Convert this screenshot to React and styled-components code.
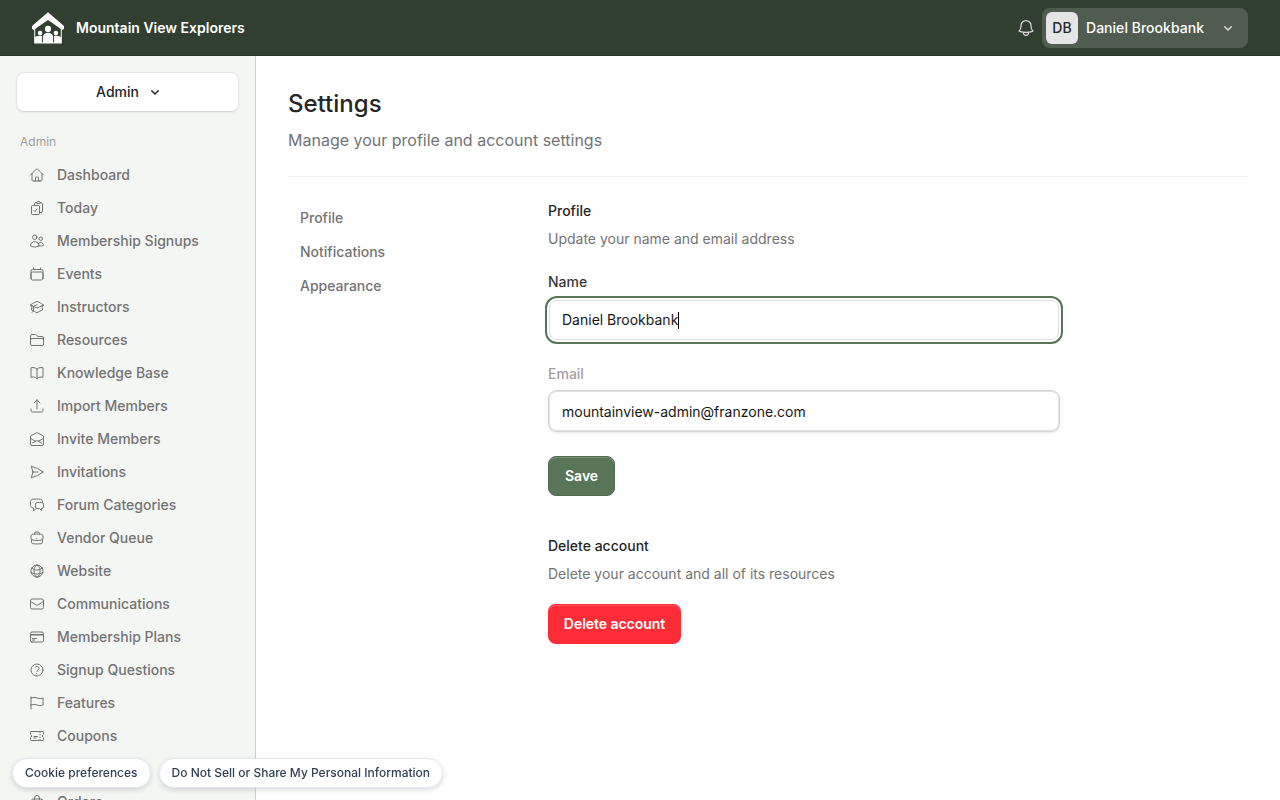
import styled, { createGlobalStyle } from 'styled-components'
import {
    HiOutlineHome,
    HiOutlineClipboardDocumentCheck,
    HiOutlineUsers,
    HiOutlineCalendar,
    HiOutlineAcademicCap,
    HiOutlineFolder,
    HiOutlineBookOpen,
    HiOutlineArrowUpTray,
    HiOutlineEnvelopeOpen,
    HiOutlinePaperAirplane,
    HiOutlineChatBubbleLeftRight,
    HiOutlineBriefcase,
    HiOutlineGlobeAlt,
    HiOutlineEnvelope,
    HiOutlineCreditCard,
    HiOutlineQuestionMarkCircle,
    HiOutlineFlag,
    HiOutlineTicket,
    HiOutlineShoppingBag,
    HiOutlineBell,
} from 'react-icons/hi2'

const navItems = [
    { label: 'Dashboard', icon: HiOutlineHome },
    { label: 'Today', icon: HiOutlineClipboardDocumentCheck },
    { label: 'Membership Signups', icon: HiOutlineUsers },
    { label: 'Events', icon: HiOutlineCalendar },
    { label: 'Instructors', icon: HiOutlineAcademicCap },
    { label: 'Resources', icon: HiOutlineFolder },
    { label: 'Knowledge Base', icon: HiOutlineBookOpen },
    { label: 'Import Members', icon: HiOutlineArrowUpTray },
    { label: 'Invite Members', icon: HiOutlineEnvelopeOpen },
    { label: 'Invitations', icon: HiOutlinePaperAirplane },
    { label: 'Forum Categories', icon: HiOutlineChatBubbleLeftRight },
    { label: 'Vendor Queue', icon: HiOutlineBriefcase },
    { label: 'Website', icon: HiOutlineGlobeAlt },
    { label: 'Communications', icon: HiOutlineEnvelope },
    { label: 'Membership Plans', icon: HiOutlineCreditCard },
    { label: 'Signup Questions', icon: HiOutlineQuestionMarkCircle },
    { label: 'Features', icon: HiOutlineFlag },
    { label: 'Coupons', icon: HiOutlineTicket },
    { label: 'Orders', icon: HiOutlineShoppingBag, spaced: true },
]

const settingsTabs = ['Profile', 'Notifications', 'Appearance']

function Chevron() {
    return (
        <svg width="16" height="16" viewBox="0 0 16 16" fill="currentColor">
            <path
                fillRule="evenodd"
                clipRule="evenodd"
                d="M4.22 6.22a.75.75 0 0 1 1.06 0L8 8.94l2.72-2.72a.75.75 0 1 1 1.06 1.06l-3.25 3.25a.75.75 0 0 1-1.06 0L4.22 7.28a.75.75 0 0 1 0-1.06Z"
            />
        </svg>
    )
}

function Logo() {
    return (
        <svg width="32" height="32" viewBox="0 0 32 32" fill="#fff">
            <path d="M16 .3 32 14v2.700l-1.600 1.400L16 7.900 1.600 18.100 0 16.700V14Z" />
            <path d="M2.200 17 3.200 16.200v14.400h25.600V16.200l1 .8v14.600H2.200Z" />
            <circle cx="16" cy="16.900" r="3.100" />
            <circle cx="8.100" cy="21.100" r="2.300" />
            <circle cx="23.900" cy="21.100" r="2.300" />
            <path d="M10.900 31v-6c0-2.700 2.200-4.300 5.100-4.300s5.100 1.600 5.100 4.300v6Z" />
            <path d="M2.800 31v-5.200c0-1.300 2.400-2 5.200-2 1 0 1.700.1 2.200.4-.2.600-.3 1-.3 1.800v5Z" />
            <path d="M29.200 31v-5.200c0-1.300-2.400-2-5.200-2-1 0-1.700.1-2.200.4.2.600.3 1 .3 1.800v5Z" />
        </svg>
    )
}

export default function App() {
    return (
        <>
            <GlobalStyle />
            <Page>
                <Header>
                    <Logo />
                    <Brand>Mountain View Explorers</Brand>
                    <BellButton>
                        <HiOutlineBell size={20} />
                    </BellButton>
                    <ProfileButton>
                        <Avatar>DB</Avatar>
                        <ProfileName>Daniel Brookbank</ProfileName>
                        <Chevron />
                    </ProfileButton>
                </Header>
                <Body>
                    <Sidebar>
                        <RoleButton>
                            Admin
                            <Chevron />
                        </RoleButton>
                        <NavHeading>Admin</NavHeading>
                        {navItems.map(({ label, icon: Icon, spaced }) =>
                            <NavItem key={label} $spaced={spaced}>
                                <Icon size={16} />
                                {label}
                            </NavItem>)}
                    </Sidebar>
                    <Main>
                        <Title>Settings</Title>
                        <Subtitle>Manage your profile and account settings</Subtitle>
                        <Columns>
                            <Tabs>
                                {settingsTabs.map((tab) => <Tab key={tab}>{tab}</Tab>)}
                            </Tabs>
                            <Form>
                                <SectionTitle>Profile</SectionTitle>
                                <SectionText>Update your name and email address</SectionText>
                                <Label>Name</Label>
                                <Field $focused>
                                    Daniel Brookbank
                                    <Caret />
                                </Field>
                                <Label $muted>Email</Label>
                                <Field>mountainview-admin@franzone.com</Field>
                                <SaveButton>Save</SaveButton>
                                <SectionTitle>Delete account</SectionTitle>
                                <SectionText>Delete your account and all of its resources</SectionText>
                                <DeleteButton>Delete account</DeleteButton>
                            </Form>
                        </Columns>
                    </Main>
                </Body>
                <ConsentBar>
                    <ConsentButton>Cookie preferences</ConsentButton>
                    <ConsentButton>Do Not Sell or Share My Personal Information</ConsentButton>
                </ConsentBar>
            </Page>
        </>
    )
}

const GlobalStyle = createGlobalStyle`
* {
    box-sizing: border-box;
    margin: 0;
    padding: 0;
}
body {
    font-family: Inter, sans-serif;
    font-size: 14px;
    line-height: 20px;
    color: #262626;
    background-color: #fff;
    overflow: hidden;
    -webkit-font-smoothing: antialiased;
}
button {
    font: inherit;
    color: inherit;
    border: none;
    background: none;
}
svg {
    flex-shrink: 0;
}
`
const Page = styled.div`
height: 100vh;
overflow: hidden;
display: flex;
flex-direction: column;
`
const Header = styled.header`
height: 56px;
flex-shrink: 0;
padding: 0 32px;
display: flex;
align-items: center;
background-color: #313f31;
border-bottom: 1px solid #283528;
color: #fff;
`
const Brand = styled.span`
margin-left: 12px;
font-weight: 600;
`
const BellButton = styled.button`
margin-left: auto;
width: 20px;
height: 20px;
color: rgba(255, 255, 255, 0.8);
`
const ProfileButton = styled.button`
margin-left: 6px;
width: 206px;
height: 40px;
padding: 0 12px 0 4px;
display: flex;
align-items: center;
border-radius: 8px;
background-color: #505c4f;
svg {
    color: rgba(255, 255, 255, 0.8);
}
`
const Avatar = styled.span`
width: 32px;
height: 32px;
line-height: 32px;
border-radius: 6px;
background-color: #e5e5e5;
color: #262626;
font-weight: 500;
text-align: center;
`
const ProfileName = styled.span`
margin: 0 auto 0 8px;
color: #fff;
font-weight: 500;
letter-spacing: 0.03px;
`
const Body = styled.div`
flex: 1;
min-height: 0;
display: flex;
`
const Sidebar = styled.aside`
width: 256px;
flex-shrink: 0;
padding: 16px;
display: flex;
flex-direction: column;
overflow: hidden;
background-color: #f4f6f3;
border-right: 1px solid #c8d5c6;
`
const RoleButton = styled.button`
height: 40px;
flex-shrink: 0;
padding-left: 4px;
display: flex;
align-items: center;
justify-content: center;
gap: 8px;
border: 1px solid #e5e5e5;
border-bottom-color: #d9d9d9;
border-radius: 8px;
background-color: #fff;
box-shadow: 0 1px 2px rgba(0, 0, 0, 0.05);
font-weight: 500;
`
const NavHeading = styled.h2`
margin: 20px 4px 6px;
font-size: 12px;
line-height: 20px;
font-weight: 400;
color: #9f9f9f;
`
const NavItem = styled.a`
height: 33px;
flex-shrink: 0;
margin-top: ${({ $spaced }) => $spaced ? '33px' : '0'};
padding: 0 13px;
display: flex;
align-items: center;
gap: 12px;
font-weight: 500;
color: #737373;
`
const Main = styled.main`
flex: 1;
padding: 32px;
`
const Title = styled.h1`
font-size: 24px;
line-height: 32px;
font-weight: 500;
`
const Subtitle = styled.p`
margin-top: 8px;
padding-bottom: 24px;
border-bottom: 1px solid #f2f2f2;
font-size: 16px;
line-height: 24px;
color: #737373;
`
const Columns = styled.div`
display: flex;
padding-top: 24px;
`
const Tabs = styled.nav`
width: 260px;
display: flex;
flex-direction: column;
`
const Tab = styled.a`
height: 34px;
padding: 0 12px;
line-height: 34px;
font-weight: 500;
color: #737373;
`
const Form = styled.div`
width: 512px;
`
const SectionTitle = styled.h3`
font-size: 14px;
line-height: 20px;
font-weight: 500;
`
const SectionText = styled.p`
margin-top: 8px;
color: #737373;
`
const Label = styled.label`
display: block;
margin-top: ${({ $muted }) => $muted ? '24px' : '23px'};
margin-bottom: ${({ $muted }) => $muted ? '7px' : '8px'};
color: ${({ $muted }) => $muted ? '#9f9f9f' : '#3a3a3a'};
font-weight: 500;
`
const Field = styled.div`
height: 40px;
margin: 0 1px;
padding: ${({ $focused }) => $focused ? '0 12px' : '2px 12px 0'};
display: flex;
align-items: center;
border: 1px solid #e0e0e0;
border-radius: 8px;
color: #171717;
outline: ${({ $focused }) => $focused ? '2px solid #587657' : 'none'};
outline-offset: 2px;
box-shadow: ${({ $focused }) => $focused ? 'none' : '0 0 0 1px #d4d4d4, 0 1px 3px 1px rgba(0, 0, 0, 0.1)'};
`
const Caret = styled.span`
width: 1px;
height: 17px;
background-color: #000;
`
const SaveButton = styled.button`
display: block;
height: 40px;
margin: 25px 0 40px;
padding: 0 16px;
border: 1px solid #4f6b4f;
border-radius: 8px;
background-color: #587657;
box-shadow: inset 0 1px rgba(255, 255, 255, 0.2);
color: #fff;
font-weight: 600;
`
const DeleteButton = styled.button`
display: block;
width: 133px;
height: 40px;
margin-top: 20px;
border-radius: 8px;
background-color: #fe2c36;
box-shadow: inset 0 1px #fe2c36, inset 0 2px rgba(255, 255, 255, 0.2);
color: #fff;
font-weight: 600;
letter-spacing: -0.04px;
`
const ConsentBar = styled.div`
position: fixed;
left: 12px;
bottom: 12px;
display: flex;
gap: 8px;
`
const ConsentButton = styled.button`
height: 30px;
padding: 0 12px;
border: 1px solid #e5e9ef;
border-radius: 15px;
background-color: #fff;
box-shadow: 0 2px 5px rgba(15, 23, 42, 0.15);
color: #334155;
font-size: 12px;
font-weight: 500;
`
